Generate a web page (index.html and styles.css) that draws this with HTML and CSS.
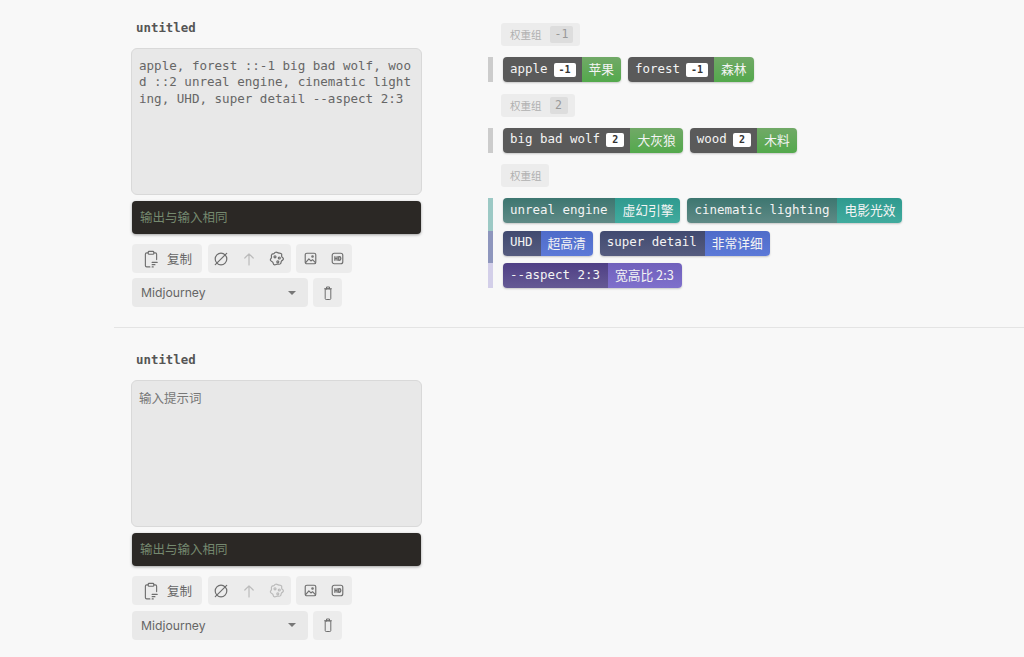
FILE: index.html
```html
<!DOCTYPE html>
<html lang="en">
<head>
    <meta charset="UTF-8">
    <meta name="viewport" content="width=device-width, initial-scale=1">
    <title>Prompt Editor</title>
    <link rel="stylesheet" href="styles.css">
</head>
<body>
    <section class="section">
        <div class="editor">
            <div class="title">untitled</div>
            <textarea class="prompt" spellcheck="false">apple, forest ::-1 big bad wolf, wood ::2 unreal engine, cinematic lighting, UHD, super detail --aspect 2:3</textarea>
            <div class="output">输出与输入相同</div>
            <div class="toolbar">
                <div class="btn-group copy-group">
                    <svg class="icon icon-copy" viewBox="0 0 16 16"><path d="M10.500 2.500h1.300c.7 0 1.200.5 1.200 1.200V8.500M5.500 2.500H4.200C3.500 2.500 3 3 3 3.700v10.100c0 .7.5 1.200 1.200 1.200H7"/><rect x="5.500" y="1.200" width="5" height="2.600" rx=".8"/><path d="M9 11h4.500M9 13h2.500M9 15h1"/></svg>
                    <span>复制</span>
                </div>
                <div class="btn-group ops-group">
                    <svg class="icon" viewBox="0 0 16 16"><circle cx="8" cy="8" r="5.800"/><path d="M2.300 13.700L13.700 2.300"/></svg>
                    <svg class="icon faint" viewBox="0 0 16 16"><path d="M8 14V2.800M3.800 7L8 2.800 12.200 7"/></svg>
                    <svg class="icon" viewBox="0 0 16 16"><path d="M6.500 1.300c1.300-.5 2.200.6 3.300.8 1.100.2 2.300 0 2.800 1 .4.900-.3 1.700.2 2.600.5.900 1.800 1.300 1.600 2.500-.2 1.100-1.500 1.100-2 2-.5.900-.2 2-1.100 2.700-1 .8-2 0-3.100.2-1.100.2-1.900 1.200-3 .7-1.100-.5-.8-1.700-1.400-2.500C3.200 10.500 1.700 10.300 1.400 9.200c-.3-1.100 1-1.700 1.100-2.800.1-1.100-.5-2 .2-2.900C3.300 2.600 4.500 3.100 5.200 2.400c.4-.4.700-.9 1.300-1.100z"/><circle cx="6" cy="5.800" r="1"/><circle cx="10.300" cy="7" r="1"/><circle cx="8.800" cy="10.800" r="1"/></svg>
                </div>
                <div class="btn-group media-group">
                    <svg class="icon icon-small" viewBox="0 0 16 16"><rect x="1.500" y="1.500" width="13" height="13" rx="2"/><path d="M2 13l4-4.500 2.500 2.500 2-1.500 3.500 3.500"/><circle cx="10.500" cy="5.500" r=".9"/></svg>
                    <svg class="icon icon-small" viewBox="0 0 16 16"><rect x="1.500" y="1.500" width="13" height="13" rx="2.500"/><path class="thick" d="M4.800 5.800v4.400M7.500 5.800v4.400M4.800 8h2.700M9.500 5.800v4.400h.8c1.100 0 1.800-.9 1.800-2.200s-.7-2.200-1.800-2.200z"/></svg>
                </div>
            </div>
            <div class="toolbar select-row">
                <div class="select"><span>Midjourney</span><i class="caret"></i></div>
                <div class="btn-group trash">
                    <svg class="icon icon-thin" viewBox="0 0 16 16"><path d="M4.500 3.800h7M6.500 3.800V2h3v1.800"/><rect x="5.200" y="3.800" width="5.600" height="10.700" rx="1"/></svg>
                </div>
            </div>
        </div>
        <div class="tags">
            <div class="group">
                <div class="group-head">权重组<b>-1</b></div>
                <div class="line line-gray">
                    <div class="tag green"><div class="tag-en">apple<em>-1</em></div><div class="tag-zh">苹果</div></div>
                    <div class="tag green"><div class="tag-en">forest<em>-1</em></div><div class="tag-zh">森林</div></div>
                </div>
            </div>
            <div class="group">
                <div class="group-head">权重组<b>2</b></div>
                <div class="line line-gray">
                    <div class="tag green"><div class="tag-en">big bad wolf<em>2</em></div><div class="tag-zh">大灰狼</div></div>
                    <div class="tag green"><div class="tag-en">wood<em>2</em></div><div class="tag-zh">木料</div></div>
                </div>
            </div>
            <div class="group">
                <div class="group-head">权重组</div>
                <div class="line line-teal">
                    <div class="tag teal"><div class="tag-en">unreal engine</div><div class="tag-zh">虚幻引擎</div></div>
                    <div class="tag teal"><div class="tag-en">cinematic lighting</div><div class="tag-zh">电影光效</div></div>
                </div>
                <div class="line line-blue">
                    <div class="tag blue"><div class="tag-en">UHD</div><div class="tag-zh">超高清</div></div>
                    <div class="tag blue"><div class="tag-en">super detail</div><div class="tag-zh">非常详细</div></div>
                </div>
                <div class="line line-purple">
                    <div class="tag purple"><div class="tag-en">--aspect 2:3</div><div class="tag-zh tag-wide">宽高比 2:3</div></div>
                </div>
            </div>
        </div>
    </section>

    <section class="section">
        <div class="editor">
            <div class="title">untitled</div>
            <textarea class="prompt" spellcheck="false" placeholder="输入提示词"></textarea>
            <div class="output">输出与输入相同</div>
            <div class="toolbar">
                <div class="btn-group copy-group">
                    <svg class="icon icon-copy" viewBox="0 0 16 16"><path d="M10.500 2.500h1.300c.7 0 1.200.5 1.200 1.200V8.500M5.500 2.500H4.200C3.500 2.500 3 3 3 3.700v10.100c0 .7.5 1.200 1.200 1.200H7"/><rect x="5.500" y="1.200" width="5" height="2.600" rx=".8"/><path d="M9 11h4.500M9 13h2.500M9 15h1"/></svg>
                    <span>复制</span>
                </div>
                <div class="btn-group ops-group">
                    <svg class="icon" viewBox="0 0 16 16"><circle cx="8" cy="8" r="5.800"/><path d="M2.300 13.700L13.700 2.300"/></svg>
                    <svg class="icon faint" viewBox="0 0 16 16"><path d="M8 14V2.800M3.800 7L8 2.800 12.200 7"/></svg>
                    <svg class="icon faint" viewBox="0 0 16 16"><path d="M6.500 1.300c1.300-.5 2.200.6 3.300.8 1.100.2 2.300 0 2.800 1 .4.900-.3 1.700.2 2.600.5.900 1.800 1.300 1.600 2.500-.2 1.100-1.500 1.100-2 2-.5.900-.2 2-1.100 2.700-1 .8-2 0-3.100.2-1.100.2-1.900 1.200-3 .7-1.100-.5-.8-1.700-1.400-2.500C3.200 10.500 1.700 10.300 1.400 9.200c-.3-1.100 1-1.700 1.100-2.800.1-1.100-.5-2 .2-2.900C3.300 2.600 4.500 3.100 5.200 2.400c.4-.4.700-.9 1.300-1.100z"/><circle cx="6" cy="5.800" r="1"/><circle cx="10.300" cy="7" r="1"/><circle cx="8.800" cy="10.800" r="1"/></svg>
                </div>
                <div class="btn-group media-group">
                    <svg class="icon icon-small" viewBox="0 0 16 16"><rect x="1.500" y="1.500" width="13" height="13" rx="2"/><path d="M2 13l4-4.500 2.500 2.500 2-1.500 3.500 3.500"/><circle cx="10.500" cy="5.500" r=".9"/></svg>
                    <svg class="icon icon-small" viewBox="0 0 16 16"><rect x="1.500" y="1.500" width="13" height="13" rx="2.500"/><path class="thick" d="M4.800 5.800v4.400M7.500 5.800v4.400M4.800 8h2.700M9.500 5.800v4.400h.8c1.100 0 1.800-.9 1.800-2.200s-.7-2.200-1.800-2.200z"/></svg>
                </div>
            </div>
            <div class="toolbar select-row">
                <div class="select"><span>Midjourney</span><i class="caret"></i></div>
                <div class="btn-group trash">
                    <svg class="icon icon-thin" viewBox="0 0 16 16"><path d="M4.500 3.800h7M6.500 3.800V2h3v1.800"/><rect x="5.200" y="3.800" width="5.600" height="10.700" rx="1"/></svg>
                </div>
            </div>
        </div>
    </section>
</body>
</html>
```

FILE: styles.css
```css
* {
    box-sizing: border-box;
}

body {
    margin: 0;
    background-color: #f8f8f8;
    color: #555;
    font-family: "Inter", "Noto Sans CJK SC", sans-serif;
}

.section {
    margin-left: 114px;
    padding: 22px 0 20px 17px;
    border-bottom: 1px solid #e4e4e4;
    display: flex;
    gap: 66px;
}

.section:first-child {
    padding-top: 18px;
}

.section:last-child {
    border-bottom: none;
}

.editor {
    width: 291px;
    flex: none;
}

.title {
    margin: 0 0 12px 5px;
    height: 18px;
    line-height: 20px;
    font-family: "DejaVu Sans Mono", "Noto Sans CJK SC", monospace;
    font-size: 12.4px;
    font-weight: bold;
    color: #555;
}

.prompt {
    display: block;
    width: 291px;
    height: 147px;
    padding: 9px 7px 6px;
    border: 1px solid #d9d9d9;
    border-radius: 6px;
    background-color: #e8e8e8;
    color: #666;
    font-family: "DejaVu Sans Mono", "Noto Sans CJK SC", monospace;
    font-size: 12.55px;
    line-height: 16.4px;
    word-break: break-all;
    resize: none;
    outline: none;
    overflow: hidden;
}

.prompt::placeholder {
    color: #777;
    font-family: "Noto Sans CJK SC", sans-serif;
    font-size: 12.5px;
}

.output {
    margin: 6px 1px 0;
    height: 33px;
    line-height: 33px;
    padding-left: 8px;
    border-radius: 4px;
    background-color: #2b2825;
    box-shadow: 0 1px 3px rgba(0, 0, 0, 0.35);
    color: #75896f;
    font-size: 12.5px;
}

.toolbar {
    margin: 10px 0 0 1px;
    display: flex;
    gap: 5.5px;
}

.select-row {
    margin-top: 5.3px;
    gap: 5px;
}

.btn-group {
    height: 29px;
    display: flex;
    align-items: center;
    justify-content: center;
    border-radius: 4px;
    background-color: #ececec;
}

.copy-group {
    width: 70px;
    gap: 7px;
    font-size: 12.5px;
    color: #666;
}

.ops-group {
    width: 83px;
    gap: 12px;
}

.media-group {
    width: 56px;
    gap: 14px;
}

.trash {
    width: 29px;
}

.icon {
    width: 16px;
    height: 16px;
    fill: none;
    stroke: #6e6e6e;
    stroke-width: 1.2;
    stroke-linecap: round;
    stroke-linejoin: round;
}

.icon-copy {
    width: 18px;
    height: 18px;
    stroke-width: 1;
}

.icon-small {
    width: 13px;
    height: 13px;
    stroke-width: 1.4;
}

.icon-thin {
    stroke-width: 1;
}

.icon.faint {
    stroke: #bbb;
}

.icon .thick {
    stroke-width: 1.6;
}

.select {
    width: 176px;
    height: 29px;
    padding: 0 9px;
    display: flex;
    align-items: center;
    justify-content: space-between;
    border-radius: 4px;
    background-color: #e9e9e9;
    color: #666;
    font-size: 12.2px;
}

.caret {
    margin-right: 3px;
    border-left: 4.5px solid transparent;
    border-right: 4.5px solid transparent;
    border-top: 4.5px solid #777;
}

.tags {
    flex: 1;
    padding-top: 5px;
}

.group {
    margin-bottom: 11.6px;
}

.group-head {
    margin: 0 0 11px 13px;
    width: fit-content;
    height: 23px;
    padding: 0 7px 0 9px;
    display: flex;
    align-items: center;
    gap: 8px;
    border-radius: 3px;
    background-color: #ececec;
    color: #b0b0b0;
    font-size: 10.5px;
}

.group-head b {
    min-width: 18px;
    height: 17px;
    line-height: 17px;
    padding: 0 5px;
    border-radius: 2px;
    background-color: #dddddd;
    color: #999;
    font-family: "DejaVu Sans Mono", monospace;
    font-size: 11.5px;
    font-weight: normal;
    text-align: center;
}

.line {
    display: flex;
    gap: 7px;
    padding-left: 10px;
    border-left: 5px solid #cccccc;
}

.line:not(:last-child) {
    padding-bottom: 7.5px;
}

.line-teal {
    border-left-color: #9cc9c5;
}

.line-blue {
    border-left-color: #8e96bd;
}

.line-purple {
    border-left-color: #d3cfe9;
}

.tag {
    height: 25px;
    display: flex;
    border-radius: 4px;
    overflow: hidden;
    box-shadow: 0 1px 2px rgba(0, 0, 0, 0.2);
    color: #f4f4f4;
    font-size: 12.75px;
    line-height: 24px;
}

.tag-en {
    padding: 0 8px 2px 7px;
    display: flex;
    align-items: center;
    font-family: "DejaVu Sans Mono", "Noto Sans CJK SC", monospace;
    font-size: 12.46px;
    white-space: pre;
}

.tag-en em {
    margin: 2px -2px 0 6px;
    min-width: 18.5px;
    height: 14px;
    line-height: 14px;
    padding: 0 5px;
    border-radius: 2px;
    background-color: #fff;
    color: #333;
    font-style: normal;
    font-weight: bold;
    font-size: 10px;
    text-align: center;
}

.tag-zh {
    padding: 0 7px;
    font-family: "Noto Sans CJK SC", sans-serif;
    white-space: nowrap;
}

.tag-wide {
    padding-right: 8px;
}

.green .tag-en {
    background: #5a5a5a;
}

.green .tag-zh {
    background: linear-gradient(#71a967, #53a94c);
}

.teal .tag-en {
    background: linear-gradient(#3d7670, #5f8a86);
}

.teal .tag-zh {
    background: linear-gradient(#2f9a8f, #41ab9e);
}

.blue .tag-en {
    background: linear-gradient(#414a70, #565c7f);
}

.blue .tag-zh {
    background: linear-gradient(#4f6cc9, #5c79d8);
}

.purple .tag-en {
    background: linear-gradient(#4f3f85, #655a94);
}

.purple .tag-zh {
    background: linear-gradient(#7060bb, #7f70cc);
}
```
